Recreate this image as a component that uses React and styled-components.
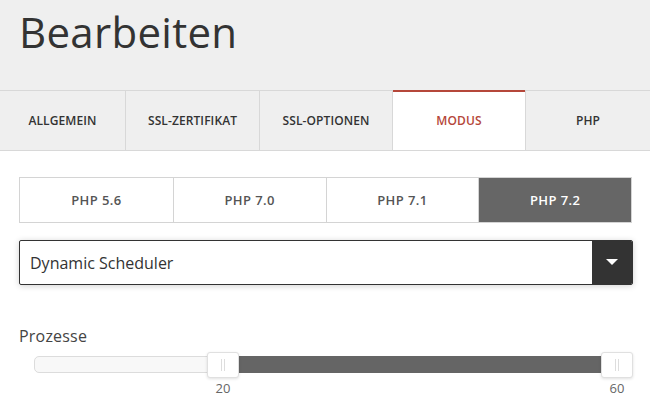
import React from "react";
import styled, { createGlobalStyle } from "styled-components";

const Global = createGlobalStyle`
  html, body { margin: 0; padding: 0; background: #fff; }
  body { font-family: "Open Sans", "Noto Sans", sans-serif; color: #333; width: 650px; height: 410px; overflow: hidden; }
`;

const Header = styled.header`
  background: #efefef;
  height: 90px;
  padding: 0 19px;
  box-sizing: border-box;
  display: flex;
  align-items: flex-start;
`;

const Title = styled.h1`
  margin: 7px 0 0;
  font-size: 42px;
  font-weight: 400;
  line-height: 50px;
  color: #333;
  letter-spacing: 0.3px;
`;

const Tabs = styled.nav`
  display: grid;
  grid-template-columns: 125fr 134fr 133fr 133fr 125fr;
  background: #efefef;
  border-top: 1px solid #d8d8d8;
  border-bottom: 1px solid #d8d8d8;
  height: 61px;
  box-sizing: border-box;
`;

const Tab = styled.div`
  display: flex;
  align-items: center;
  justify-content: center;
  font-size: 12px;
  font-weight: 600;
  color: ${(p) => (p.$active ? "#b5473a" : "#333")};
  background: ${(p) => (p.$active ? "#fff" : "transparent")};
  border-left: ${(p) => (p.$first ? "none" : "1px solid #d8d8d8")};
  box-shadow: ${(p) => (p.$active ? "inset 0 2px 0 #b5473a" : "none")};
  margin-top: ${(p) => (p.$active ? "-1px" : "0")};
  padding-top: ${(p) => (p.$active ? "1px" : "0")};
  letter-spacing: 0.1px;
`;

const Content = styled.main`
  padding: 26px 18px 0 19px;
  display: flex;
  flex-direction: column;
`;

const VersionGroup = styled.div`
  display: grid;
  grid-template-columns: repeat(4, 1fr);
  border: 1px solid #d4d4d4;
  height: 46px;
  box-sizing: border-box;
`;

const VersionButton = styled.div`
  display: flex;
  align-items: center;
  justify-content: center;
  font-size: 13px;
  font-weight: 600;
  letter-spacing: 0.4px;
  color: ${(p) => (p.$active ? "#fff" : "#555")};
  background: ${(p) => (p.$active ? "#666" : "#fff")};
  border-left: ${(p) => (p.$first ? "none" : "1px solid #d4d4d4")};
`;

const Select = styled.div`
  margin-top: 17px;
  height: 45px;
  box-sizing: border-box;
  border: 1px solid #333;
  border-radius: 2px;
  display: flex;
  box-shadow: 0 1px 6px rgba(0, 0, 0, 0.18);
  overflow: hidden;
  margin-right: -1px;
`;

const SelectValue = styled.div`
  flex: 1;
  display: flex;
  align-items: center;
  padding-left: 10px;
  font-size: 16px;
  color: #333;
`;

const SelectButton = styled.div`
  width: 40px;
  background: #333;
  display: flex;
  align-items: center;
  justify-content: center;
`;

const Label = styled.div`
  margin-top: 40px;
  font-size: 16px;
  color: #444;
  letter-spacing: 0.2px;
`;

const SliderWrap = styled.div`
  position: relative;
  margin: 3px 12px 0 15px;
  height: 50px;
`;

const Track = styled.div`
  position: absolute;
  left: 0;
  right: 0;
  top: 6px;
  height: 17px;
  box-sizing: border-box;
  background: #f8f8f8;
  border: 1px solid #dcdcdc;
  border-radius: 5px;
`;

const Range = styled.div`
  position: absolute;
  top: 6px;
  height: 17px;
  background: #656565;
  border-radius: 0 3px 3px 0;
`;

const Handle = styled.div`
  position: absolute;
  top: 2px;
  width: 32px;
  height: 26px;
  margin-left: -16px;
  box-sizing: border-box;
  background: #fff;
  border: 1px solid #e0e0e0;
  border-radius: 3px;
  box-shadow: 0 1px 3px rgba(0, 0, 0, 0.12);
  display: flex;
  align-items: center;
  justify-content: center;
  gap: 2px;
  &::before, &::after {
    content: "";
    width: 1px;
    height: 12px;
    background: #ddd;
  }
`;

const HandleValue = styled.div`
  position: absolute;
  top: 29px;
  width: 40px;
  margin-left: -20px;
  text-align: center;
  font-size: 13px;
  color: #666;
`;

export default function App() {
  const tabs = ["ALLGEMEIN", "SSL-ZERTIFIKAT", "SSL-OPTIONEN", "MODUS", "PHP"];
  const versions = ["PHP 5.6", "PHP 7.0", "PHP 7.1", "PHP 7.2"];
  const lo = 189;
  const hi = 583;
  return (
    <>
      <Global />
      <Header>
        <Title>Bearbeiten</Title>
      </Header>
      <Tabs>
        {tabs.map((t, i) => (
          <Tab key={t} $first={i === 0} $active={t === "MODUS"}>
            {t}
          </Tab>
        ))}
      </Tabs>
      <Content>
        <VersionGroup>
          {versions.map((v, i) => (
            <VersionButton key={v} $first={i === 0} $active={v === "PHP 7.2"}>
              {v}
            </VersionButton>
          ))}
        </VersionGroup>
        <Select>
          <SelectValue>Dynamic Scheduler</SelectValue>
          <SelectButton>
            <svg width="12" height="7" viewBox="0 0 12 7">
              <path d="M0 0 L12 0 L6 6 Z" fill="#fff" />
            </svg>
          </SelectButton>
        </Select>
        <Label>Prozesse</Label>
        <SliderWrap>
          <Track />
          <Range style={{ left: lo, width: hi - lo }} />
          <Handle style={{ left: lo }} />
          <Handle style={{ left: hi }} />
          <HandleValue style={{ left: lo }}>20</HandleValue>
          <HandleValue style={{ left: hi }}>60</HandleValue>
        </SliderWrap>
      </Content>
    </>
  );
}
